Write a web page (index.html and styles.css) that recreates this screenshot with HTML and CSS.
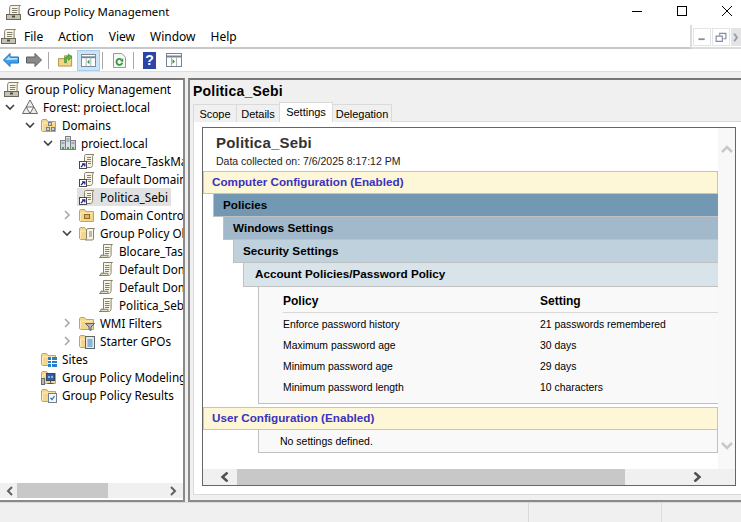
FILE: index.html
```html
<!DOCTYPE html>
<html lang="en">
<head>
<meta charset="utf-8">
<title>Group Policy Management</title>
<link rel="stylesheet" href="styles.css">
</head>
<body>
<svg class="defs" xmlns="http://www.w3.org/2000/svg">
  <symbol id="scroll" viewBox="0 0 16 16">
    <path d="M5.500 1.500h9c-1 .6-1.400 1.400-1.400 2.400v7.600c0 1.700-.9 3-2.400 3H1.500c1-.4 1.600-1.100 1.600-2.200h2.400z" fill="#f8f5e6" stroke="#85816c"/>
    <path d="M1.500 14.500c1-.4 1.600-1.100 1.600-2.200h7c0 1.100-.2 1.800-.8 2.200z" fill="#e4dfc4" stroke="#85816c"/>
    <path d="M7 4.500h4.500M7 6.500h4.500M7 8.500h4.500M7 10.500h4" stroke="#85816c"/>
  </symbol>
  <symbol id="linked" viewBox="0 0 16 16">
    <path d="M6.500 1.500h8.500c-1 .6-1.400 1.400-1.400 2.400v7.600c0 1.700-.9 3-2.400 3H5.500v-11c0-1 .3-1.600.8-2z" fill="#f8f5e6" stroke="#85816c"/>
    <path d="M8 4.500h4M8 6.500h4M8 8.500h4M9 10.500h3" stroke="#85816c"/>
    <rect x=".5" y="8.500" width="7" height="7" fill="#fff" stroke="#4a4a4a"/>
    <path d="M2 14l3-3M3 10.800h2.800v2.800" fill="none" stroke="#26269c" stroke-width="1.300"/>
  </symbol>
  <symbol id="root" viewBox="0 0 16 16">
    <path d="M5 1.500h9.500c-1 .6-1.400 1.400-1.400 2.400v7H3.600V3.400c0-.9.500-1.500 1.400-1.900z" fill="#f8f5e6" stroke="#85816c"/>
    <path d="M6 4.500h5.500M6 6.500h5.500M6 8.500h5" stroke="#85816c"/>
    <rect x=".5" y="10.500" width="14" height="5" fill="#c6c3b2" stroke="#6a685a"/>
    <rect x="6" y="11.500" width="3" height="2" fill="#4d4b42"/>
  </symbol>
  <symbol id="folder" viewBox="0 0 16 16">
    <path d="M.5 4V13c0 .8.500 1.500 1.300 1.500h12.700V4.500H7L5.600 2.500H2C1 2.500.5 3 .5 4z" fill="#f5d68a" stroke="#c9a456"/>
    <path d="M1.500 13.500V6h12" fill="none" stroke="#fcedc0"/>
  </symbol>
  <symbol id="folder-doc" viewBox="0 0 16 16">
    <use href="#folder"/>
    <path d="M8.500 3.500h7l-1 1.500v8c0 1-.5 2-1.500 2H6.500c.8-.4 1-1 1-2V5z" fill="#f8f5e6" stroke="#85816c"/>
    <path d="M10 7h3M10 9h3M10 11h3" stroke="#85816c"/>
  </symbol>
  <symbol id="server" viewBox="0 0 16 16">
    <rect x=".5" y="5.500" width="5" height="9" fill="#cfd4d8" stroke="#7a8288"/>
    <rect x="5.500" y="1.500" width="5" height="13" fill="#dde1e4" stroke="#7a8288"/>
    <rect x="10.500" y="5.500" width="5" height="9" fill="#cfd4d8" stroke="#7a8288"/>
    <path d="M6.500 4h3M6.500 6h3M1.500 8h3M11.500 8h3" stroke="#7a8288"/>
    <path d="M2 13h2M7 13h2M12 13h2" stroke="#3fae3f" stroke-width="2"/>
  </symbol>
</svg>

<div class="app">
  <header class="titlebar">
    <svg class="ico title-ico"><use href="#root"/></svg>
    <span class="title-text">Group Policy Management</span>
    <div class="win-controls">
      <svg class="win-btn" viewBox="0 0 10 10"><path d="M0 5.500h10" stroke="#000"/></svg>
      <svg class="win-btn" viewBox="0 0 10 10"><rect x=".5" y=".5" width="9" height="9" fill="none" stroke="#000"/></svg>
      <svg class="win-btn" viewBox="0 0 10 10"><path d="M0 0l10 10M10 0L0 10" stroke="#000"/></svg>
    </div>
  </header>

  <nav class="menubar">
    <div class="menu">
      <svg class="ico menu-ico"><use href="#root"/></svg>
      <span class="menu-item m-file">File</span>
      <span class="menu-item m-action">Action</span>
      <span class="menu-item m-view">View</span>
      <span class="menu-item m-window">Window</span>
      <span class="menu-item m-help">Help</span>
    </div>
    <div class="mdi">
      <span class="mdi-btn"><svg viewBox="0 0 18 17"><rect x="5" y="10" width="7" height="2" fill="#7f8ea0"/></svg></span>
      <span class="mdi-btn"><svg viewBox="0 0 18 17"><path d="M7.500 5.500V3.500h7v6h-3M3.500 6.500h7v6h-7z" transform="translate(0 1)" fill="none" stroke="#7f8ea0" stroke-width="1.300"/></svg></span>
      <span class="mdi-btn mdi-cut"><svg viewBox="0 0 10 17"><path d="M2 5l3 4-3 4" fill="none" stroke="#8fa0b4" stroke-width="2"/></svg></span>
    </div>
  </nav>

  <div class="toolbar">
    <svg class="tool tool-arrow" viewBox="0 0 16 14"><path d="M7 .5L.5 7 7 13.500V10h8.500V4H7z" fill="#3f9fe8" stroke="#1e6fb8"/><path d="M2.500 7L6.500 3v2h8v1.500z" fill="#bfe3fb"/></svg>
    <svg class="tool tool-arrow fwd" viewBox="0 0 16 14"><path d="M9 .5L15.500 7 9 13.500V10H.5V4H9z" fill="#8a8a8a" stroke="#5e5e5e"/></svg>
    <span class="sep"></span>
    <svg class="tool tool-up" viewBox="0 0 16 16"><path d="M.5 6.500V14.500h14V3.500H7v3z" fill="#f3d587" stroke="#b48f3f"/><path d="M7 11V7.500C7 5 9 4 11 4V1.500L15 5l-4 3.500V6c-1.500 0-2 .5-2 2v3z" fill="#58b848" stroke="#2f7f2a" stroke-width=".6"/></svg>
    <span class="tool-on">
      <svg class="tool tool-pane" viewBox="0 0 16 14"><rect x=".5" y=".5" width="15" height="13" fill="#fff" stroke="#76858f"/><path d="M.5 3.500h15" stroke="#76858f" stroke-width="2"/><path d="M5.500 4v9M10.500 4v9" stroke="#a7b2ba"/><path d="M9 6v5L6.500 8.500z" fill="#2e9a3c"/></svg>
    </span>
    <span class="sep"></span>
    <svg class="tool tool-refresh" viewBox="0 0 14 16"><path d="M.5.5h9l4 4v11H.5z" fill="#f7f7f7" stroke="#8e8e8e"/><path d="M10 10.500a3.200 3.200 0 1 1-1-3.500" fill="none" stroke="#2f9b3c" stroke-width="2"/><path d="M7.500 8.500L11 9.500V5.500z" fill="#2f9b3c"/></svg>
    <span class="sep sep-b"></span>
    <span class="help-tool">?</span>
    <svg class="tool tool-pane2" viewBox="0 0 16 14"><rect x=".5" y=".5" width="15" height="13" fill="#fff" stroke="#76858f"/><path d="M.5 3.500h15" stroke="#76858f" stroke-width="2"/><path d="M5.500 4v9M10.500 4v9" stroke="#a7b2ba"/><path d="M6.500 6v5L9 8.500z" fill="#2e9a3c"/></svg>
  </div>

  <main class="main">
    <section class="left">
      <div class="tree">
        <div class="row d0"><svg class="ico"><use href="#root"/></svg><span class="label">Group Policy Management</span></div>
        <div class="row d1"><svg class="chev open" viewBox="0 0 10 10"><path d="M1 3l4 4 4-4"/></svg><svg class="ico" viewBox="0 0 16 16"><path d="M8 1L15.500 14.500H.5z" fill="#ededed" stroke="#6a6a6a"/><path d="M4.300 8h7.400L8 14.500z" fill="#fff" stroke="#6a6a6a"/></svg><span class="label">Forest: proiect.local</span></div>
        <div class="row d2"><svg class="chev open" viewBox="0 0 10 10"><path d="M1 3l4 4 4-4"/></svg><svg class="ico" viewBox="0 0 16 16"><use href="#folder"/><rect x="7.500" y="5.500" width="3" height="3" fill="#cfd4d8" stroke="#6f7f8c"/><rect x="5.500" y="10.500" width="3" height="3" fill="#cfd4d8" stroke="#6f7f8c"/><rect x="10.500" y="10.500" width="3" height="3" fill="#cfd4d8" stroke="#6f7f8c"/></svg><span class="label">Domains</span></div>
        <div class="row d3"><svg class="chev open" viewBox="0 0 10 10"><path d="M1 3l4 4 4-4"/></svg><svg class="ico"><use href="#server"/></svg><span class="label">proiect.local</span></div>
        <div class="row d4"><span class="chev"></span><svg class="ico"><use href="#linked"/></svg><span class="label">Blocare_TaskManager</span></div>
        <div class="row d4"><span class="chev"></span><svg class="ico"><use href="#linked"/></svg><span class="label">Default Domain Policy</span></div>
        <div class="row d4"><span class="chev"></span><span class="selected"><svg class="ico"><use href="#linked"/></svg><span class="label">Politica_Sebi</span></span></div>
        <div class="row d4"><svg class="chev" viewBox="0 0 10 10"><path d="M3 1l4 4-4 4"/></svg><svg class="ico" viewBox="0 0 16 16"><use href="#folder"/><rect x="5.500" y="7.500" width="5" height="4" fill="#d9b65a" stroke="#8c6d25"/></svg><span class="label">Domain Controllers</span></div>
        <div class="row d4"><svg class="chev open" viewBox="0 0 10 10"><path d="M1 3l4 4 4-4"/></svg><svg class="ico"><use href="#folder-doc"/></svg><span class="label">Group Policy Objects</span></div>
        <div class="row d5"><span class="chev"></span><svg class="ico"><use href="#scroll"/></svg><span class="label">Blocare_TaskManager</span></div>
        <div class="row d5"><span class="chev"></span><svg class="ico"><use href="#scroll"/></svg><span class="label">Default Domain Controllers Policy</span></div>
        <div class="row d5"><span class="chev"></span><svg class="ico"><use href="#scroll"/></svg><span class="label">Default Domain Policy</span></div>
        <div class="row d5"><span class="chev"></span><svg class="ico"><use href="#scroll"/></svg><span class="label">Politica_Sebi</span></div>
        <div class="row d4"><svg class="chev" viewBox="0 0 10 10"><path d="M3 1l4 4-4 4"/></svg><svg class="ico" viewBox="0 0 16 16"><use href="#folder"/><path d="M6.500 8.500h9l-3.500 3.500v3.500l-2-1V12z" fill="#aeb6bc" stroke="#5b666e"/></svg><span class="label">WMI Filters</span></div>
        <div class="row d4"><svg class="chev" viewBox="0 0 10 10"><path d="M3 1l4 4-4 4"/></svg><svg class="ico" viewBox="0 0 16 16"><use href="#folder"/><rect x="6.500" y="3.500" width="9" height="12" fill="#dfe8ef" stroke="#5b666e"/><path d="M8.500 7h5M8.500 9h5M8.500 11h5M8.500 13h5" stroke="#3f7fae"/></svg><span class="label">Starter GPOs</span></div>
        <div class="row d2"><span class="chev"></span><svg class="ico" viewBox="0 0 16 16"><use href="#folder"/><rect x="7" y="6" width="9" height="10" fill="#2a7fc4"/><path d="M7 9.500h9M7 12.500h9M10.500 6v10" stroke="#fff"/></svg><span class="label">Sites</span></div>
        <div class="row d2"><span class="chev"></span><svg class="ico" viewBox="0 0 16 16"><use href="#folder"/><rect x=".5" y="9.500" width="3" height="6" fill="#b5b5b5" stroke="#6a6a6a"/><rect x="5.500" y="4.500" width="8" height="7" fill="#2d5fb0" stroke="#33475f"/><path d="M7.500 7h1v2h-1zM10.500 7h1v2h-1z" fill="#fff"/><path d="M9.500 11.500v3M6.500 14.500h6" stroke="#555"/></svg><span class="label">Group Policy Modeling</span></div>
        <div class="row d2"><span class="chev"></span><svg class="ico" viewBox="0 0 16 16"><use href="#folder"/><rect x="7.500" y="6.500" width="8" height="9" fill="#f4f6f8" stroke="#6f7f8c"/><path d="M9.500 11l1.500 1.500 2.500-3.500" fill="none" stroke="#2a6fb0" stroke-width="1.200"/></svg><span class="label">Group Policy Results</span></div>
      </div>
      <div class="hscroll left-hscroll">
        <svg class="sb-arrow" viewBox="0 0 10 10"><path d="M7 1L3 5l4 4"/></svg>
        <div class="track"><div class="thumb"></div></div>
        <svg class="sb-arrow" viewBox="0 0 10 10"><path d="M3 1l4 4-4 4"/></svg>
      </div>
    </section>

    <section class="right">
      <h1 class="gpo-name">Politica_Sebi</h1>
      <div class="tabs">
        <span class="tab t-scope">Scope</span>
        <span class="tab t-details">Details</span>
        <span class="tab active t-settings">Settings</span>
        <span class="tab t-delegation">Delegation</span>
      </div>
      <div class="tabpanel">
        <div class="report">
          <div class="report-body">
            <div class="report-main">
              <div class="report-head">
                <div class="report-title">Politica_Sebi</div>
                <div class="report-date">Data collected on: 7/6/2025 8:17:12 PM</div>
              </div>
              <div class="config">Computer Configuration (Enabled)</div>
              <div class="lvl l1">Policies</div>
              <div class="lvl l2">Windows Settings</div>
              <div class="lvl l3">Security Settings</div>
              <div class="lvl l4">Account Policies/Password Policy</div>
              <div class="detail">
                <table class="grid">
                  <thead><tr><th>Policy</th><th>Setting</th></tr></thead>
                  <tbody>
                    <tr><td>Enforce password history</td><td>21 passwords remembered</td></tr>
                    <tr><td>Maximum password age</td><td>30 days</td></tr>
                    <tr><td>Minimum password age</td><td>29 days</td></tr>
                    <tr><td>Minimum password length</td><td>10 characters</td></tr>
                  </tbody>
                </table>
              </div>
              <div class="config user">User Configuration (Enabled)</div>
              <div class="none">No settings defined.</div>
            </div>
            <div class="vscroll">
              <svg class="vs-arrow" viewBox="0 0 12 10"><path d="M1 8l5-5 5 5"/></svg>
              <svg class="vs-arrow" viewBox="0 0 12 10"><path d="M1 2l5 5 5-5"/></svg>
            </div>
          </div>
          <div class="hscroll report-hscroll">
            <svg class="sb-arrow dark" viewBox="0 0 10 10"><path d="M7.500 .5L2.500 5l5 4.500"/></svg>
            <div class="track"><div class="thumb"></div></div>
            <svg class="sb-arrow dark" viewBox="0 0 10 10"><path d="M2.500 .5l5 4.500-5 4.500"/></svg>
          </div>
        </div>
      </div>
    </section>
  </main>

  <footer class="status">
    <span class="cell c1"></span>
    <span class="cell c2"></span>
    <span class="cell c3"></span>
  </footer>
</div>
</body>
</html>
```
FILE: styles.css
```css
* { box-sizing: border-box; }
html, body { margin: 0; padding: 0; }
body { background: #fff; color: #000; font-family: "Noto Sans", "Open Sans", sans-serif; font-size: 12px; overflow: hidden; }
.defs { display: none; }
.app { width: 741px; height: 522px; display: flex; flex-direction: column; overflow: hidden; }
.ico { width: 16px; height: 16px; flex: none; display: block; }

.titlebar { height: 25px; flex: none; display: flex; align-items: center; padding-left: 6px; }
.title-text { margin-left: 5px; font-size: 11.400px; position: relative; top: -1px; }
.title-ico { position: relative; top: -1px; }
.win-controls { margin-left: auto; display: flex; gap: 35px; padding-right: 9px; position: relative; top: -2px; }
.win-btn { width: 10px; height: 10px; display: block; }

.menubar { height: 24px; flex: none; display: flex; }
.menu { width: 692px; display: flex; align-items: center; border-bottom: 2px solid #c8c8c8; border-right: 2px solid #dcdcdc; padding-left: 1px; }
.menu-ico { margin-right: 7px; }
.menu-item { font-size: 12px; }
.m-action { margin-left: 15px; }
.m-view { margin-left: 15px; }
.m-window { margin-left: 15px; }
.m-help { margin-left: 15px; }
.mdi { flex: 1; display: flex; gap: 1px; padding: 3px 0 0 1px; border-bottom: 2px solid #dcdcdc; height: 24px; overflow: hidden; }
.mdi-btn { width: 18px; height: 18px; border: 1px solid #e4e4e4; flex: none; display: block; }
.mdi-btn svg { width: 16px; height: 16px; display: block; }
.mdi-cut { background: #e4e4e4; width: 12px; }
.mdi-cut svg { width: 10px; }

.toolbar { height: 23px; flex: none; display: flex; align-items: center; padding-left: 3px; border-bottom: 1px solid #dedede; }
.tool { display: block; flex: none; }
.tool-arrow { width: 16px; height: 14px; }
.fwd { margin-left: 7px; }
.sep { width: 1px; height: 17px; background: #a8a8a8; margin: 0 9px 0 6px; flex: none; }
.tool-up { width: 15px; height: 16px; }
.tool-on { width: 23px; height: 21px; margin-left: 4px; background: #cce4f7; border: 1px solid #a6cdec; display: flex; align-items: center; justify-content: center; flex: none; }
.tool-pane { width: 15px; height: 13px; }
.tool-on + .sep { margin: 0 10px 0 2px; }
.tool-refresh { width: 13px; height: 15px; }
.sep-b { margin: 0 9px 0 7px; }
.help-tool { width: 13px; height: 17px; background: #2b46a8; color: #fff; font: bold 14px/17px "Liberation Sans", sans-serif; text-align: center; flex: none; }
.tool-pane2 { width: 16px; height: 14px; margin-left: 10px; }

.main { height: 430px; flex: none; margin-top: 0; padding-top: 6px; background: #f0f0f0; display: flex; gap: 3px; }
.left { width: 185px; flex: none; background: #fff; border-top: 2px solid #777; border-right: 2px solid #8a8a8a; border-bottom: 2px solid #8a8a8a; display: flex; flex-direction: column; }
.tree { flex: 1; overflow: hidden; min-height: 0; }
.row { height: 18px; display: flex; align-items: center; white-space: nowrap; font-size: 11.700px; }
.chev { width: 10px; height: 10px; margin-right: 7px; flex: none; display: block; }
.chev path { fill: none; stroke: #a8a8a8; stroke-width: 1.600; }
.chev.open path { stroke: #404040; }
.d0 { padding-left: 4px; }
.d1 { padding-left: 5px; }
.d2 { padding-left: 25px; }
.d3 { padding-left: 43px; }
.d4 { padding-left: 62px; }
.d5 { padding-left: 81px; }
.d2 .chev { margin-right: 6px; }
.label { margin-left: 5px; }
.selected { display: flex; align-items: center; height: 18px; background: #e1e1e1; padding: 0 3px 0 2px; margin-left: -2px; }

.hscroll { display: flex; align-items: center; background: #f0f0f0; flex: none; }
.left-hscroll { height: 15px; margin: 0 0 2px; padding: 0 3px; }
.track { flex: 1; height: 100%; }
.thumb { height: 100%; background: #c8c8c8; }
.left-hscroll .thumb { width: 91px; }
.sb-arrow { width: 10px; height: 10px; flex: none; display: block; margin: 0 2px; }
.sb-arrow path { fill: none; stroke: #606060; stroke-width: 2; }

.right { flex: 1; min-width: 0; border-top: 2px solid #777; border-left: 2px solid #8a8a8a; border-bottom: 2px solid #8a8a8a; padding-left: 3px; display: flex; flex-direction: column; }
.gpo-name { margin: 0; height: 22px; font: bold 14px/22px "Liberation Sans", sans-serif; letter-spacing: .2px; flex: none; }
.tabs { display: flex; height: 20px; align-items: flex-end; flex: none; margin-bottom: -1px; position: relative; }
.tab { height: 18px; line-height: 19px; text-align: center; border: 1px solid #dadada; border-bottom: 0; margin-right: -1px; font-family: "Liberation Sans", sans-serif; font-size: 11px; background: #f0f0f0; }
.t-scope { width: 44px; }
.t-details { width: 44px; }
.t-settings { width: 54px; }
.t-delegation { width: 60px; }
.tab.active { height: 20px; background: #fff; line-height: 19px; position: relative; z-index: 1; }
.tabpanel { flex: 1; min-height: 0; background: #fff; border-top: 1px solid #dadada; border-left: 1px solid #dadada; border-bottom: 1px solid #dadada; margin-bottom: 5px; padding: 5px 5px 8px 8px; }
.report { height: 100%; border: 1px solid #666; display: flex; flex-direction: column; }
.report-body { flex: 1; min-height: 0; display: flex; }
.report-main { flex: 1; min-width: 0; }
.vscroll { width: 17px; flex: none; background: #f8f8f8; display: flex; flex-direction: column; justify-content: space-between; align-items: center; padding: 16px 0 18px; }
.vs-arrow { width: 12px; height: 10px; display: block; }
.vs-arrow path { fill: none; stroke: #c8c8c8; stroke-width: 2.500; }
.report-head { height: 43px; padding: 5px 0 0 13px; }
.report-title { font: bold 15px/20px "Liberation Sans", sans-serif; color: #333; letter-spacing: .2px; }
.report-date { font: 10.500px/16px "Liberation Sans", sans-serif; color: #222; }
.config { height: 23px; padding-left: 8px; background: #fdf6d7; border: 1px solid #c4c4c4; font: bold 11.700px/20px "Liberation Sans", sans-serif; color: #3a32c0; }
.lvl { height: 23px; font: bold 11.700px/22px "Liberation Sans", sans-serif; padding-left: 9px; border-bottom: 1px solid #c0c0c0; border-left: 1px solid #c0c0c0; }
.l1 { margin-left: 10px; background: #7298b3; }
.l2 { margin-left: 20px; background: #a2b8cb; }
.l3 { margin-left: 30px; background: #bfd1dd; }
.l4 { margin-left: 40px; background: #d8e3ea; padding-left: 11px; height: 24px; }
.detail { margin-left: 55px; background: #f9f9f9; border-left: 1px solid #c0c0c0; border-bottom: 1px solid #c0c0c0; height: 117px; padding: 3px 0 0 24px; }
.grid { width: 100%; border-collapse: collapse; table-layout: fixed; font: 10.400px "Liberation Sans", sans-serif; }
.grid th { text-align: left; font: bold 12px "Liberation Sans", sans-serif; height: 22px; padding: 0; border-bottom: 1px solid #d8d8d8; }
.grid th:first-child, .grid td:first-child { width: 257px; }
.grid td { height: 21px; padding: 4px 0 0; }
.user { margin-top: 3px; }
.none { margin-left: 55px; height: 23px; background: #f9f9f9; border-left: 1px solid #c0c0c0; border-bottom: 1px solid #c0c0c0; border-right: 1px solid #c0c0c0; padding-left: 21px; font: 10.500px/22px "Liberation Sans", sans-serif; }
.report-hscroll { height: 16px; padding: 0 26px 0 15px; }
.report-hscroll .thumb { width: 388px; }
.report-hscroll .sb-arrow { margin: 0 7px 0 2px; }
.sb-arrow.dark path { stroke: #505050; stroke-width: 2.500; }

.status { flex: 1; display: flex; border-top: 1px solid #dadada; background: #f0f0f0; }
.cell { display: block; height: 100%; }
.c1 { width: 529px; border-right: 1px solid #dadada; }
.c2 { width: 133px; border-right: 1px solid #dadada; }
.c3 { flex: 1; }
```
